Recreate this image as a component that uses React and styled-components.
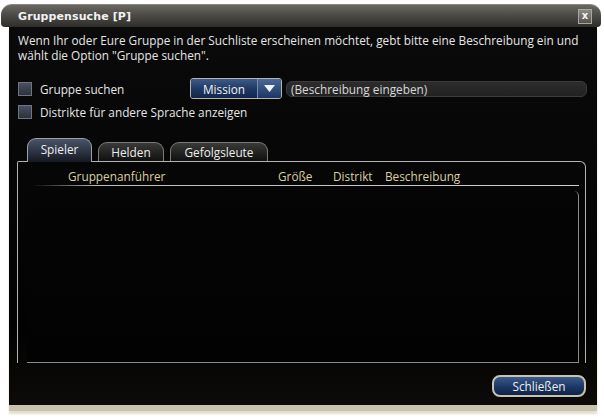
import React from 'react';
import styled, { createGlobalStyle } from 'styled-components';

const GlobalStyle = createGlobalStyle`
  html, body {
    margin: 0;
    background: #ffffff;
  }
  body {
    font-family: "Open Sans", "DejaVu Sans", sans-serif;
  }
`;

const Frame = styled.div`
  width: 604px;
  height: 420px;
  padding-top: 4px;
  box-sizing: border-box;
  display: flex;
  flex-direction: column;
`;

const TitleBar = styled.div`
  height: 23px;
  margin: 0 3px 0 1px;
  border-radius: 11px 11px 4px 4px;
  background: linear-gradient(#6a6862 0%, #4c4b47 45%, #2e2d2b 100%);
  border-top: 1px solid #8a877e;
  display: flex;
  align-items: center;
  justify-content: space-between;
  padding: 0 9px 0 17px;
  box-sizing: border-box;
`;

const Title = styled.div`
  font-family: "DejaVu Sans", sans-serif;
  font-weight: bold;
  font-size: 11px;
  color: #f2f2f2;
  letter-spacing: 0.1px;
`;

const CloseX = styled.div`
  width: 14px;
  height: 15px;
  background: linear-gradient(#8c8a84, #55534e);
  border: 1px solid #aaa79f;
  box-sizing: border-box;
  display: flex;
  align-items: center;
  justify-content: center;
  color: #f4f4f4;
  font-family: "DejaVu Sans", sans-serif;
  font-weight: bold;
  font-size: 10px;
  line-height: 1;
`;

const Body = styled.div`
  flex: 1;
  margin: 0 7px 9px 9px;
  background: linear-gradient(#0a0a0a, #020202 80%, #0c0b09 100%);
  border-bottom: 6px solid #c9c2ae;
  box-shadow: 0 3px 2px #e4decd;
  padding: 6px 10px 0 9px;
  display: flex;
  flex-direction: column;
`;

const Intro = styled.p`
  margin: 0;
  font-size: 11.8px;
  line-height: 15px;
  color: #e6e6e6;
`;

const OptionRow = styled.div`
  display: flex;
  align-items: center;
  height: ${p => p.$h}px;
  margin-top: ${p => p.$top}px;
`;

const Check = styled.div`
  width: 14px;
  height: 14px;
  box-sizing: border-box;
  background: linear-gradient(#4a5060, #2c313c);
  border: 1px solid #6e7484;
  margin-right: 8px;
  flex: none;
`;

const Label = styled.span`
  font-size: 11.8px;
  color: #e6e6e6;
  width: ${p => (p.$w ? `${p.$w}px` : 'auto')};
`;

const Select = styled.div`
  display: flex;
  height: 21px;
  border: 1px solid #b8b4a8;
  border-radius: 3px;
  box-sizing: border-box;
  overflow: hidden;
  background: #1e2b44;
`;

const SelectValue = styled.div`
  width: 66px;
  display: flex;
  align-items: center;
  justify-content: center;
  font-size: 11.8px;
  color: #f2f2f2;
  background: linear-gradient(#3e5a88 0%, #203a66 50%, #12264a 100%);
  border-right: 1px solid #7e8aa4;
`;

const SelectArrow = styled.div`
  width: 23px;
  display: flex;
  align-items: center;
  justify-content: center;
  background: linear-gradient(#4a6898, #1c3664);
`;

const TextInput = styled.div`
  flex: 1;
  height: 16px;
  margin-left: 4px;
  border-radius: 6px;
  background: linear-gradient(#2c2c2c, #222222);
  border: 1px solid #3c3c3c;
  box-sizing: border-box;
  display: flex;
  align-items: center;
  padding-left: 4px;
  font-size: 11.8px;
  color: #d8d8d8;
`;

const Tabs = styled.div`
  display: flex;
  gap: 6px;
  margin: 17px 0 0 9px;
  height: 24px;
  align-items: flex-end;
`;

const Tab = styled.div`
  width: ${p => p.$w}px;
  height: ${p => (p.$active ? 24 : 19)}px;
  box-sizing: border-box;
  border: 1px solid ${p => (p.$active ? '#9aa0ac' : '#7a7a78')};
  border-bottom: none;
  border-radius: 9px 9px 0 0;
  background: ${p =>
    p.$active
      ? 'linear-gradient(#4a5466 0%, #2a3140 60%, #141820 100%)'
      : 'linear-gradient(#3a3a38 0%, #1c1c1b 70%, #101010 100%)'};
  display: flex;
  align-items: center;
  justify-content: center;
  font-size: 11.8px;
  color: #eeeeee;
  padding-bottom: ${p => (p.$active ? 3 : 0)}px;
  margin-bottom: ${p => (p.$active ? -1 : 0)}px;
  position: relative;
  z-index: ${p => (p.$active ? 2 : 1)};
`;

const Panel = styled.div`
  margin: 0 1px 0 -1px;
  height: 202px;
  box-sizing: border-box;
  border: 1px solid #b4b4b4;
  border-bottom: none;
  border-radius: 2px 6px 0 0;
  display: flex;
  flex-direction: column;
  padding: 0 6px 0 9px;
`;

const HeaderRow = styled.div`
  display: grid;
  grid-template-columns: 35px 210px 55px 52px 1fr;
  height: 24px;
  box-sizing: border-box;
  padding-bottom: 1px;
  align-items: end;
  border-bottom: 1px solid transparent;
  border-image: linear-gradient(90deg, rgba(200,200,200,0) 0%, #bdbdbd 12%, #cfcfcf 100%) 1;
  margin-left: 6px;
`;

const HeaderCell = styled.span`
  font-size: 11.8px;
  color: #dccfa0;
  white-space: nowrap;
`;

const ListBox = styled.div`
  flex: 1;
  margin-top: 5px;
  border-right: 1px solid #8a8a8a;
  border-bottom: 1px solid #8a8a8a;
  border-radius: 0 5px 0 0;
  background: linear-gradient(#050505, #020202);
`;

const Footer = styled.div`
  display: flex;
  justify-content: flex-end;
  margin-top: 12px;
  padding-right: 1px;
`;

const CloseButton = styled.div`
  width: 94px;
  height: 22px;
  box-sizing: border-box;
  border: 2px solid #c8c2ae;
  border-radius: 8px;
  background: linear-gradient(#3c5a88 0%, #1e3a68 50%, #0e2248 100%);
  display: flex;
  align-items: center;
  justify-content: center;
  font-size: 11.8px;
  color: #f0f0f0;
`;

export default function App() {
  return (
    <>
      <GlobalStyle />
      <Frame>
        <TitleBar>
          <Title>Gruppensuche [P]</Title>
          <CloseX>x</CloseX>
        </TitleBar>
        <Body>
          <Intro>
            Wenn Ihr oder Eure Gruppe in der Suchliste erscheinen möchtet, gebt bitte eine Beschreibung ein und
            <br />
            wählt die Option "Gruppe suchen".
          </Intro>
          <OptionRow $h={21} $top={15}>
            <Check />
            <Label $w={150}>Gruppe suchen</Label>
            <Select>
              <SelectValue>Mission</SelectValue>
              <SelectArrow>
                <svg width="11" height="7" viewBox="0 0 11 7">
                  <path d="M0 0 H11 L5.5 7 Z" fill="#f2f2f2" />
                </svg>
              </SelectArrow>
            </Select>
            <TextInput>(Beschreibung eingeben)</TextInput>
          </OptionRow>
          <OptionRow $h={16} $top={5}>
            <Check />
            <Label>Distrikte für andere Sprache anzeigen</Label>
          </OptionRow>
          <Tabs>
            <Tab $w={65} $active>Spieler</Tab>
            <Tab $w={66}>Helden</Tab>
            <Tab $w={98}>Gefolgsleute</Tab>
          </Tabs>
          <Panel>
            <HeaderRow>
              <span />
              <HeaderCell>Gruppenanführer</HeaderCell>
              <HeaderCell>Größe</HeaderCell>
              <HeaderCell>Distrikt</HeaderCell>
              <HeaderCell>Beschreibung</HeaderCell>
            </HeaderRow>
            <ListBox />
          </Panel>
          <Footer>
            <CloseButton>Schließen</CloseButton>
          </Footer>
        </Body>
      </Frame>
    </>
  );
}
